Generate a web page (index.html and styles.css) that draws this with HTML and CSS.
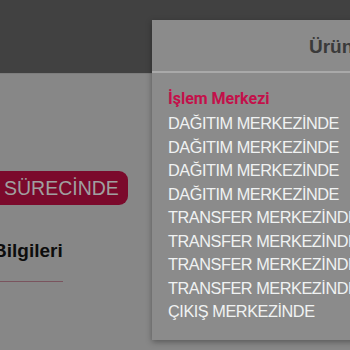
FILE: index.html
```html
<!DOCTYPE html>
<html lang="tr">
<head>
<meta charset="utf-8">
<link rel="stylesheet" href="styles.css">
</head>
<body>
<header class="topbar"></header>
<main class="content">
  <div class="badge">SÜRECİNDE</div>
  <h2 class="section-title">Bilgileri</h2>
  <div class="section-rule"></div>
</main>
<div class="modal">
  <div class="modal-head">Ürün Hareketleri</div>
  <div class="modal-body">
    <div class="menu-title">İşlem Merkezi</div>
    <ul class="menu">
      <li>DAĞITIM MERKEZİNDE</li>
      <li>DAĞITIM MERKEZİNDE</li>
      <li>DAĞITIM MERKEZİNDE</li>
      <li>DAĞITIM MERKEZİNDE</li>
      <li>TRANSFER MERKEZİNDE</li>
      <li>TRANSFER MERKEZİNDE</li>
      <li>TRANSFER MERKEZİNDE</li>
      <li>TRANSFER MERKEZİNDE</li>
      <li>ÇIKIŞ MERKEZİNDE</li>
    </ul>
  </div>
</div>
</body>
</html>
```
FILE: styles.css
```css
html, body {
  margin: 0;
  padding: 0;
  width: 350px;
  height: 350px;
  overflow: hidden;
  background: #878787;
  font-family: "Liberation Sans", Arial, sans-serif;
}
.topbar {
  height: 73px;
  background: #414141;
  border-bottom: 1px solid #7d7d7d;
}
.content {
  padding-top: 97px;
}
.badge {
  display: inline-block;
  margin-left: -20px;
  background: #7b0a2c;
  color: #a0a0a0;
  font-size: 19.5px;
  line-height: 34px;
  padding: 0 9px 0 24px;
  border-radius: 9px;
  white-space: nowrap;
}
.section-title {
  margin: 34px 0 0 -7px;
  font-size: 19px;
  font-weight: bold;
  color: #0d0d0d;
  line-height: 24px;
  white-space: nowrap;
}
.section-rule {
  margin-top: 18px;
  width: 63px;
  height: 1px;
  background: #7a545e;
}
.modal {
  position: absolute;
  left: 152px;
  top: 20px;
  width: 320px;
  height: 320px;
  background: #8b8b8b;
  box-shadow: 0 2px 6px rgba(0,0,0,0.35);
}
.modal-head {
  height: 51px;
  border-bottom: 2px solid #a9a9a9;
  font-weight: bold;
  font-size: 19px;
  color: #3a3a3a;
  line-height: 54px;
  padding-left: 157px;
  white-space: nowrap;
}
.modal-body {
  padding: 16px 0 0 16px;
}
.menu-title {
  font-family: Roboto, "Liberation Sans", sans-serif;
  font-weight: bold;
  font-size: 16px;
  color: #c3104a;
  line-height: 20px;
}
.menu {
  list-style: none;
  margin: 3px 0 0;
  padding: 0;
}
.menu li {
  font-size: 16.3px;
  letter-spacing: -0.45px;
  line-height: 23.5px;
  color: #f0f2f2;
  white-space: nowrap;
}
```
